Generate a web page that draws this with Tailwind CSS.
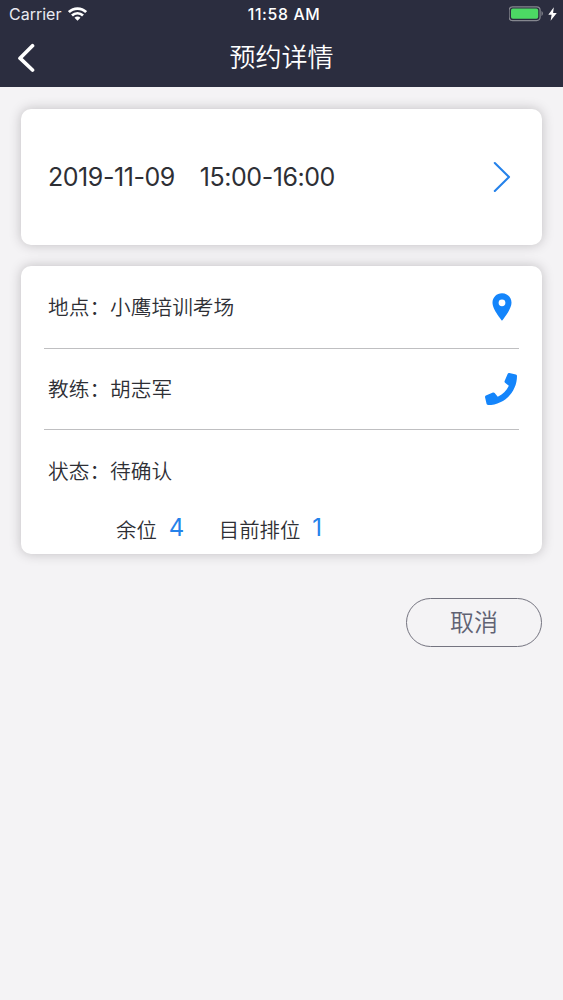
<!DOCTYPE html>
<html lang="zh-CN">
<head>
<meta charset="utf-8">
<title>预约详情</title>
<script src="https://cdn.jsdelivr.net/npm/@tailwindcss/browser@4"></script>
</head>
<body class="flex h-[1000px] w-[563px] flex-col overflow-hidden bg-[#f4f3f5] font-['Inter','Noto_Sans_CJK_SC',sans-serif] text-[#2e2f35]">
<header class="h-[87px] shrink-0 bg-[#2b2d3f] text-white">
  <div class="grid h-7 grid-cols-3 items-center pl-[9px] pr-1.5 text-base leading-7">
    <div class="flex h-7 items-center gap-[7px]">
      <span class="text-[16px] text-[#e9eaf2]">Carrier</span>
      <svg class="h-[14px] w-[19px]" viewBox="0 0 19 14" fill="none" stroke="currentColor" stroke-width="2.7">
        <path d="M.9 5.1a12.2 12.2 0 0 1 17.2 0"/><path d="M4 8.5a7.8 7.8 0 0 1 11 0"/><path d="M9.5 13.8 6.5 10.8a4.2 4.2 0 0 1 6 0z" fill="currentColor" stroke="none"/>
      </svg>
    </div>
    <span class="h-7 pl-[2px] pt-px text-center text-[15.8px] font-medium tracking-[0.65px] whitespace-nowrap">11:58 AM</span>
    <div class="flex h-7 items-center justify-end gap-1">
      <svg class="h-4 w-[35px]" viewBox="0 0 35 16">
        <rect x=".1" y=".8" width="31" height="13.8" rx="3.5" fill="none" stroke="#85878f" stroke-width="1.2"/>
        <rect x="2" y="2.6" width="27.2" height="10.2" rx="1.8" fill="#4cd964"/>
        <path d="M32.5 5.1c1.8.8 1.8 4.2 0 5z" fill="#85878f"/>
      </svg>
      <svg class="h-[14px] w-[9px]" viewBox="0 0 9 14" fill="currentColor"><path d="M5.8.2.3 7.8h3.3L2.6 13.8 8.8 6H5.1z"/></svg>
    </div>
  </div>
  <div class="grid h-[59px] grid-cols-[80px_1fr_80px] items-center">
    <svg class="ml-[17px] h-[30px] w-[18px]" viewBox="0 0 18 30" fill="none" stroke="currentColor" stroke-width="3.7" stroke-linecap="round" stroke-linejoin="round"><path d="M15.5 2.8 3 15.2 15.5 27"/></svg>
    <h1 class="text-center text-[26px] font-[350] leading-[57px]">预约详情</h1>
  </div>
</header>
<main class="flex flex-col px-[21px] pt-[22px]">
  <section class="flex h-[136px] items-center justify-between rounded-[10px] bg-white pl-[27px] pr-[31px] shadow-[0_0_12px_rgba(40,30,40,0.25)]">
    <div class="flex gap-[25px] pt-0.5 text-[25px] tracking-[-0.45px]"><span>2019-11-09</span><span>15:00-16:00</span></div>
    <svg class="h-8 w-[18px]" viewBox="0 0 18 32" fill="none" stroke="#2582ea" stroke-width="2.1" stroke-linecap="round" stroke-linejoin="round"><path d="M1.8 2 16 16 1.8 30"/></svg>
  </section>
  <section class="mt-[21px] flex h-[288px] flex-col rounded-[10px] bg-white px-[23px] text-[20.7px] font-[350] shadow-[0_0_12px_rgba(40,30,40,0.25)]">
    <div class="flex h-[83px] items-center justify-between border-b border-[#bfbfc1] pl-1 pr-[7px]">
      <span class="pt-0.5">地点：小鹰培训考场</span>
      <svg class="h-7 w-5" viewBox="0 0 20 28" fill="#1485fb"><path fill-rule="evenodd" d="M10 .3C4.6.3.5 4.5.5 9.7.5 16.5 10 27.6 10 27.6s9.5-11.1 9.5-17.9C19.5 4.5 15.4.3 10 .3zm0 6.1a3.4 3.4 0 1 1 0 6.8 3.4 3.4 0 0 1 0-6.8z"/></svg>
    </div>
    <div class="flex h-[81px] items-center justify-between border-b border-[#bfbfc1] pl-1 pr-0.5">
      <span class="pt-0.5">教练：胡志军</span>
      <svg class="h-8 w-8" viewBox="0 0 512 512" fill="#1485fb"><path d="M493.4 24.6l-104-24c-11.300-2.600-22.900 3.300-27.500 13.900l-48 112c-4.200 9.800-1.400 21.300 6.900 28l60.600 49.600c-36 76.700-98.900 140.500-177.200 177.200l-49.600-60.600c-6.800-8.300-18.200-11.100-28-6.900l-112 48C3.900 366.500-2 378.100.6 389.400l24 104C27.100 504.200 36.700 512 48 512c256.100 0 464-207.500 464-464 0-11.200-7.700-20.900-18.600-23.400z"/></svg>
    </div>
    <div class="flex h-[83px] items-center pl-1 pt-px">状态：待确认</div>
    <div class="flex h-[35px] items-center pl-[72px] text-[20.4px]">
      <span class="pt-px">余位</span><span class="-mt-1.5 ml-3 w-[15px] text-[24px] font-normal text-[#2582ea]">4</span>
      <span class="ml-[35px] pt-px">目前排位</span><span class="-mt-1.5 ml-3 text-[24px] font-normal text-[#2582ea]">1</span>
    </div>
  </section>
  <button class="mt-[44px] h-[49px] w-[136px] self-end rounded-full border-[1.5px] border-[#747480] pt-px text-2xl font-[350] text-[#606273]">取消</button>
</main>
</body>
</html>
